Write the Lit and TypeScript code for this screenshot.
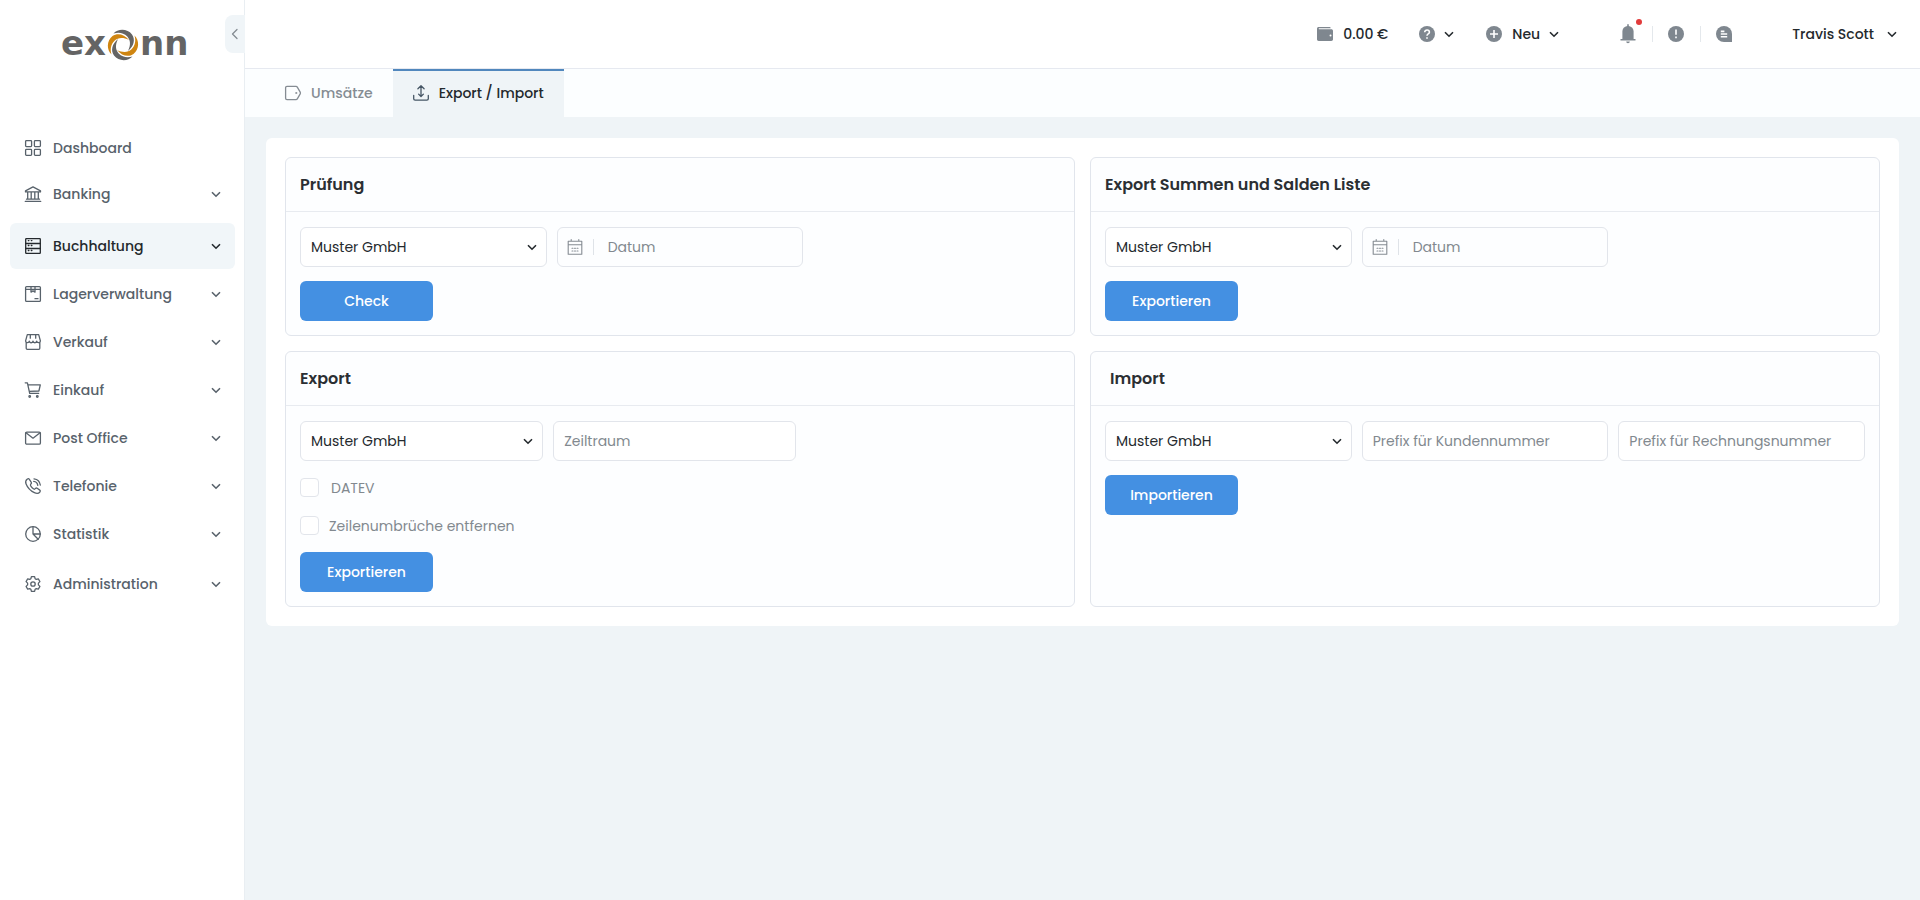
import { LitElement, html, svg, css, nothing, TemplateResult } from "lit";
import { customElement, property, state } from "lit/decorators.js";
import { classMap } from "lit/directives/class-map.js";

const glyphs: Record<string, TemplateResult> = {
  dashboard: svg`<rect x=".6" y=".6" width="6" height="6" rx=".8"/><rect x="9.4" y=".6" width="6" height="6" rx=".8"/><rect x=".6" y="9.4" width="6" height="6" rx=".8"/><rect x="9.4" y="9.4" width="6" height="6" rx=".8"/>`,
  banking: svg`<path d="M.5 4.9 8 .9l7.500 4v1H.5zM1.500 13.200h13M.3 15.400h15.400M2.700 6v7.200M6.200 6v7.200M9.800 6v7.200M13.300 6v7.200"/>`,
  ledger: svg`<rect x=".7" y=".7" width="14.600" height="14.600" rx=".6"/><path d="M.7 5.500h14.600M.7 10.500h14.600M3.300 2.600h.6M6.300 2.600h.6M3.300 7.500h.6M6.300 7.500h.6M3.300 12.500h.6M6.300 12.500h.6"/>`,
  storage: svg`<rect x=".6" y=".6" width="14.800" height="14.800" rx="1"/><path d="M.6 3.300h14.800M6 .8v5.300l2-1.200 2 1.200V.8M10 12.700h3"/>`,
  shop: svg`<path d="M2.300.7h11.400l1.700 6.200c0 2.200-3.600 2.200-3.700.2 0 2.200-3.700 2.200-3.700 0 0 2.200-3.700 2.200-3.700 0-.1 2-3.700 2-3.700-.2zM1.200 8.500v5.700c0 .7.400 1.100 1.100 1.100h11.400c.7 0 1.100-.4 1.100-1.100V8.500M5.300.8v3.400M10.700.8v3.400"/>`,
  cart: svg`<path d="M.2.8h2.200l2.300 10.500h9M2.900 2.800h12.400L13.900 9l-9.700.3"/><circle cx="4.700" cy="14.500" r=".8"/><circle cx="12.300" cy="14.500" r=".8"/>`,
  mail: svg`<rect x=".6" y="2.100" width="14.800" height="12" rx="1.200"/><path d="m1 2.800 7 5.400 7-5.400"/>`,
  phone: svg`<path d="M4.200 1.200 6.300 4.300c.4.700.2 1.300-.6 2-.7.600-.5 1 .3 2.100.9 1.200 1.700 2 2.800 2.600.6.400 1 .3 1.500-.3.600-.7 1.200-.9 1.900-.4l2.600 1.800c.7.500.7 1 .2 1.700-1.300 1.800-3.300 2-5.600.9-3.800-1.800-7-5.200-8.400-8.900C.2 3.600.8 2.100 2.400 1c.8-.5 1.400-.5 1.800.2zM9 .8c3.700.5 5.800 2.600 6.300 6.200M8.700 3.300c2.400.3 3.800 1.700 4.100 4.100"/>`,
  chart: svg`<circle cx="8" cy="8" r="7.300"/><path d="M8 .8V8h7.200M8 8l5.200 5.200"/>`,
  gear: svg`<path d="M6.400.7h3.200l.5 2 1.200.7 2-.6 1.600 2.800-1.500 1.500v1.800l1.500 1.500-1.600 2.800-2-.6-1.200.7-.5 2H6.400l-.5-2-1.200-.7-2 .6-1.600-2.800 1.500-1.500V7.100L1.100 5.600l1.600-2.800 2 .6 1.200-.7z"/><circle cx="8" cy="8" r="2.200"/>`,
  tag: svg`<path d="M2 1.400h9c.6 0 1 .2 1.300.7l2.900 5c.3.600.3 1.200 0 1.800l-2.900 5c-.3.500-.7.700-1.300.7H2c-.8 0-1.400-.6-1.400-1.400V2.800c0-.8.600-1.400 1.400-1.400z"/><circle cx="11.300" cy="8" r=".4"/>`,
  transfer: svg`<path d="M.7 10.500v3.300c0 .9.500 1.400 1.400 1.400h11.800c.9 0 1.400-.5 1.400-1.400v-3.300M8 .9v10.200M4.900 3.800 8 .8l3.100 3M5.600 9.100 8 11.500l2.400-2.400"/>`,
  calendar: svg`<path d="M1.200 2.300h13.600v12.900H1.200zM1.200 5.700h13.600M4.200.6v1.700M11.800.6v1.700M5 9.300h1M7.500 9.300h1M10 9.300h1M5 12h1M7.500 12h1M10 12h1"/>`,
  down: svg`<path d="m4 6.200 4 4 4-4"/>`,
  left: svg`<path d="m10 3.500-4.500 4.500L10 12.500"/>`,
};

const solids: Record<string, TemplateResult> = {
  wallet: svg`<path d="M1.700 1h10.600c.9 0 1.400.5 1.400 1.300H2.200c-.7 0-.7 1 0 1h12c1.100 0 1.800.6 1.800 1.700v8.300c0 1-.7 1.700-1.700 1.700H1.700C.7 15 0 14.300 0 13.300V2.700C0 1.700.7 1 1.700 1z"/><circle class="cut" cx="13.500" cy="9.500" r="1"/>`,
  help: svg`<circle cx="8" cy="8" r="8"/><path class="line" d="M5.700 6.300c0-3.200 4.700-2.900 4.700-.1C10.400 8 8 7.900 8 9.700M8 11.300v1.500"/>`,
  plus: svg`<circle cx="8" cy="8" r="8"/><path class="line" d="M8 4v8M4 8h8"/>`,
  alert: svg`<circle cx="8" cy="8" r="8"/><path class="line" d="M8 3.600v5.200M8 10.400v1.800"/>`,
  chat: svg`<path d="M8 0a8 8 0 0 1 8 8v8H8A8 8 0 0 1 8 0z"/><path class="line" d="M4.800 5.400h3.600M4.800 8h6.400M4.800 10.700h6.400"/>`,
};

const icon = (name: string) =>
  html`<svg class="icon" viewBox="0 0 16 16" aria-hidden="true">${glyphs[name]}</svg>`;
const solid = (name: string) =>
  html`<svg class="solid" viewBox="0 0 16 16" aria-hidden="true">${solids[name]}</svg>`;

const navigation = [
  { label: "Dashboard", icon: "dashboard", leaf: true },
  { label: "Banking", icon: "banking" },
  { label: "Buchhaltung", icon: "ledger", active: true },
  { label: "Lagerverwaltung", icon: "storage" },
  { label: "Verkauf", icon: "shop" },
  { label: "Einkauf", icon: "cart" },
  { label: "Post Office", icon: "mail" },
  { label: "Telefonie", icon: "phone" },
  { label: "Statistik", icon: "chart" },
  { label: "Administration", icon: "gear", last: true },
];

// One blade of the emblem; the other three are quarter turns of it.
const blade = "M5.500 3.500C10-1.500 19.500-1.500 24 4.500 27.500 9.500 26 16 20 21 23 15 22.500 10 19.300 6.500 15.500 2.600 10.500 2 5.500 3.500z";

const base = css`
  *, :host { box-sizing: border-box; }
  button, input, select { font: inherit; color: inherit; margin: 0; }
  button { border: 0; background: none; padding: 0; cursor: pointer; }
  a { color: inherit; text-decoration: none; }
  .icon, .solid { width: 16px; height: 16px; flex: none; display: block; overflow: visible; }
  .icon { fill: none; stroke: currentColor; stroke-width: 1.3; stroke-linecap: round; stroke-linejoin: round; }
  .solid { fill: #7f878f; }
  .cut { fill: #fff; }
  .line { fill: none; stroke: #fff; stroke-width: 1.6; }
`;

@customElement("app-sidebar")
class AppSidebar extends LitElement {
  static styles = [base, css`
    :host { display: block; width: 245px; flex: none; background: #fff; border-right: 1px solid #e9eef2; position: relative; }
    .logo { display: flex; align-items: center; justify-content: center; gap: 2px; height: 30px; margin: 30px 0 0 2px; color: #646464; font: 700 34px/24px "DejaVu Sans", sans-serif; }
    .word { width: 56px; padding-bottom: 4px; }
    .word.lead { text-align: right; }
    .ring { width: 30px; height: 30px; flex: none; overflow: visible; }
    .ring .gray { fill: #646464; }
    .ring .gold { fill: #cf8511; }
    .collapse { position: absolute; right: -1px; top: 15px; width: 20px; height: 38px; border-radius: 8px 0 0 8px; background: #f0f5f8; color: #858c93; display: grid; place-items: center; }
    ul { list-style: none; margin: 66px 0 0; padding: 0 9px 0 10px; display: flex; flex-direction: column; gap: 2px; }
    li a { display: flex; align-items: center; gap: 12px; height: 46px; padding: 0 11px 0 15px; border-radius: 6px; color: #58626b; font-weight: 500; }
    li a.leaf { height: 43px; }
    li.active { margin-top: 4px; }
    li.active a { background: #f1f6f9; color: #24292d; }
    li.last { margin-top: 2px; }
    .label { flex: 1; }
    .chevron .icon { stroke-width: 1.6; stroke-linecap: butt; stroke-linejoin: miter; }
  `];

  render() {
    return html`
      <a class="logo" href="#" aria-label="exonn">
        <span class="word lead">ex</span>
        <svg class="ring" viewBox="0 0 30 30" aria-hidden="true">
          ${[0, 90, 180, 270].map((turn) => svg`<path class=${turn % 180 ? "gold" : "gray"} d=${blade} transform="rotate(${turn} 15 15)"/>`)}
        </svg>
        <span class="word">nn</span>
      </a>
      <button class="collapse" aria-label="Menü einklappen">${icon("left")}</button>
      <nav>
        <ul>
          ${navigation.map((n) => html`
            <li class=${classMap({ active: !!n.active, last: !!n.last })}>
              <a href="#" class=${classMap({ leaf: !!n.leaf })}>
                ${icon(n.icon)}<span class="label">${n.label}</span>
                ${n.leaf ? nothing : html`<span class="chevron">${icon("down")}</span>`}
              </a>
            </li>`)}
        </ul>
      </nav>`;
  }
}

@customElement("app-topbar")
class AppTopbar extends LitElement {
  static styles = [base, css`
    :host { display: flex; justify-content: flex-end; align-items: center; height: 69px; padding-right: 20px; background: #fff; border-bottom: 1px solid #e6e9f0; color: #24292d; font-weight: 500; }
    .entry { display: flex; align-items: center; gap: 10px; }
    .entry .icon { stroke-width: 1.6; stroke-linecap: butt; stroke-linejoin: miter; }
    .help { margin-left: 31px; gap: 6px; }
    .new { margin-left: 29px; gap: 6px; }
    .new span { margin-left: 4px; }
    .alerts { display: flex; align-items: center; margin: 0 44px 0 43px; }
    .alerts button { position: relative; padding: 0 16px 0 15px; height: 16px; }
    .alerts button + button { border-left: 1px solid #e4e8ec; }
    .bell { width: 16px; height: 20px; margin-top: -2px; display: block; fill: #7f878f; }
    .dot { position: absolute; right: 10px; top: -7px; width: 6px; height: 6px; border-radius: 50%; background: #e23b3b; }
  `];

  render() {
    return html`
      <div class="entry">${solid("wallet")}<span>0.00 €</span></div>
      <button class="entry help" aria-label="Hilfe">${solid("help")}${icon("down")}</button>
      <button class="entry new">${solid("plus")}<span>Neu</span>${icon("down")}</button>
      <div class="alerts">
        <button aria-label="Benachrichtigungen">
          <svg class="bell" viewBox="0 0 16 20" aria-hidden="true"><path d="M7.200 2V.8c0-1 1.600-1 1.600 0V2c2.900.5 4.800 2.600 4.800 5.300V15h1.900v1.600H.5V15h1.900V7.300C2.400 4.600 4.300 2.500 7.200 2zM6.200 17.600h3.600c0 2.200-3.600 2.200-3.600 0z"/></svg>
          <span class="dot"></span>
        </button>
        <button aria-label="Hinweise">${solid("alert")}</button>
        <button aria-label="Nachrichten">${solid("chat")}</button>
      </div>
      <button class="entry user"><span>Travis Scott</span>${icon("down")}</button>`;
  }
}

@customElement("app-panel")
class AppPanel extends LitElement {
  @property() heading = "";
  @property({ type: Boolean }) inset = false;

  static styles = [base, css`
    :host { display: block; min-width: 0; border: 1px solid #e1e5ec; border-radius: 6px; background: #fdfeff; }
    h2 { margin: 0; height: 54px; padding: 0 14px; border-bottom: 1px solid #e8ebf0; color: #2b2f33; font-size: 16px; line-height: 53px; font-weight: 600; }
    h2.inset { padding-left: 19px; }
    .body { padding: 15px 14px 14px; }
  `];

  render() {
    return html`<h2 class=${classMap({ inset: this.inset })}>${this.heading}</h2><div class="body"><slot></slot></div>`;
  }
}

@customElement("app-root")
class AppRoot extends LitElement {
  @state() private tab = 1;

  static styles = [base, css`
    :host { display: flex; min-height: 100vh; background: #eff4f7; color: #24292d; font: 400 14px/20px Poppins, Inter, sans-serif; }
    .main { flex: 1; min-width: 0; }
    .tabs { display: flex; padding-left: 20px; height: 48px; background: #fcfeff; }
    .tab { display: flex; align-items: center; gap: 10px; padding: 0 20px 2px; border-top: 2px solid transparent; color: #858c93; font-weight: 500; }
    .tab.current { background: #eff4f7; border-color: #5187bd; color: #24292d; }
    .tab.current .icon { color: #465665; }
    .card { margin: 21px 21px 0; padding: 19px; background: #fff; border-radius: 6px; display: grid; grid-template-columns: repeat(2, minmax(0, 1fr)); gap: 15px; }
    .fields { display: grid; grid-template-columns: repeat(3, minmax(0, 1fr)); gap: 10px; margin-bottom: 14px; }
    .fields.narrow { grid-template-columns: 32% 32%; }
    .field { position: relative; display: block; }
    .field select, .field input { display: block; width: 100%; height: 40px; padding: 0 10px; border: 1px solid #e2e5eb; border-radius: 6px; background: #fff; outline: 0; appearance: none; }
    .field input::placeholder { color: #82898f; opacity: 1; }
    .field .icon { position: absolute; right: 7px; top: 12px; stroke-width: 1.6; stroke-linecap: butt; stroke-linejoin: miter; pointer-events: none; }
    .date { display: flex; align-items: center; gap: 10px; height: 40px; padding-left: 9px; border: 1px solid #e2e5eb; border-radius: 6px; color: #858c93; }
    .date .icon { stroke-width: 1.1; }
    .date input { flex: 1; min-width: 0; height: 16px; padding: 0 0 0 14px; border: 0; border-left: 1px solid #dfe3e8; background: none; outline: 0; }
    .date input::placeholder { color: #82898f; opacity: 1; }
    .check { display: flex; align-items: center; gap: 10px; height: 19px; margin-bottom: 19px; color: #82898f; width: max-content; }
    .check.first { margin-top: 17px; gap: 12px; }
    .check.final { margin-bottom: 17px; }
    .check input { appearance: none; width: 19px; height: 19px; border: 1px solid #e2e5eb; border-radius: 4px; background: #fff; }
    .submit { display: block; width: 133px; height: 40px; border-radius: 6px; background: #4490e2; color: #fff; font-weight: 500; }
  `];

  private company() {
    return html`<label class="field"><select aria-label="Firma"><option>Muster GmbH</option></select>${icon("down")}</label>`;
  }

  private date() {
    return html`<label class="date">${icon("calendar")}<input type="text" aria-label="Datum" placeholder="Datum"></label>`;
  }

  private text(label: string) {
    return html`<label class="field"><input type="text" aria-label=${label} placeholder=${label}></label>`;
  }

  render() {
    const tabs = [["tag", "Umsätze"], ["transfer", "Export / Import"]];
    return html`
      <app-sidebar></app-sidebar>
      <div class="main">
        <app-topbar></app-topbar>
        <div class="tabs">
          ${tabs.map(([i, label], n) => html`
            <button class=${classMap({ tab: true, current: n === this.tab })} @click=${() => (this.tab = n)}>${icon(i)}<span>${label}</span></button>`)}
        </div>
        <main class="card">
          <app-panel heading="Prüfung">
            <div class="fields">${this.company()}${this.date()}</div>
            <button class="submit">Check</button>
          </app-panel>
          <app-panel heading="Export Summen und Salden Liste">
            <div class="fields">${this.company()}${this.date()}</div>
            <button class="submit">Exportieren</button>
          </app-panel>
          <app-panel heading="Export">
            <div class="fields narrow">${this.company()}${this.text("Zeiltraum")}</div>
            <label class="check first"><input type="checkbox">DATEV</label>
            <label class="check final"><input type="checkbox">Zeilenumbrüche entfernen</label>
            <button class="submit">Exportieren</button>
          </app-panel>
          <app-panel heading="Import" inset>
            <div class="fields">${this.company()}${this.text("Prefix für Kundennummer")}${this.text("Prefix für Rechnungsnummer")}</div>
            <button class="submit">Importieren</button>
          </app-panel>
        </main>
      </div>`;
  }
}
